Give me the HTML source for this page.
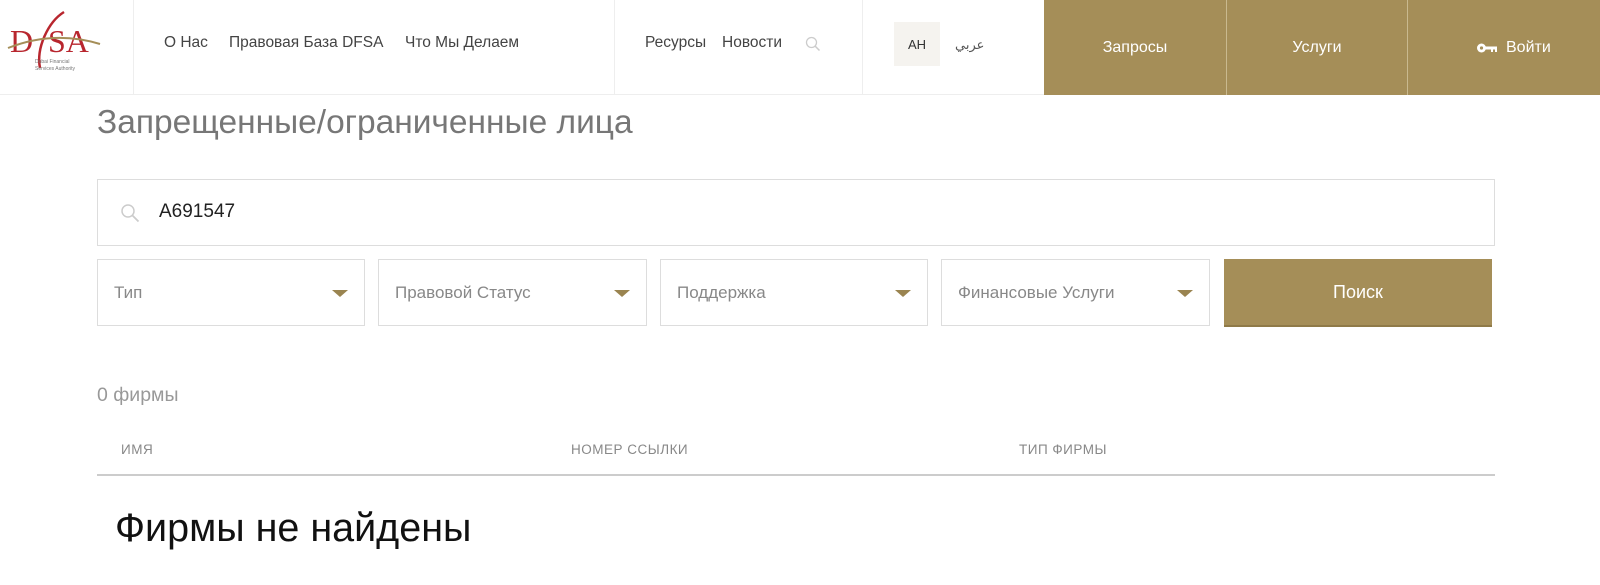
<!DOCTYPE html>
<html><head><meta charset="utf-8"><style>
*{margin:0;padding:0;box-sizing:border-box}
body{width:1600px;height:585px;background:#fff;font-family:"Liberation Sans",sans-serif;position:relative;overflow:hidden;color:#444}
.a{position:absolute}
.hdr{left:0;top:0;width:1600px;height:95px;border-bottom:1px solid #eee}
.vl{width:1px;background:#eee;top:0;height:95px}
.nav{font-size:15.5px;color:#444;top:34px}
.gold{background:#a58e58;top:0;height:95px;color:#fff;font-size:16px;display:flex;align-items:center;justify-content:center}
.box{border:1px solid #ddd;background:#fff}
.dd{top:259px;height:67px;font-size:17px;color:#888;display:flex;align-items:center;padding-left:16px}
.tri{position:absolute;right:16px;top:30px;width:0;height:0;border-left:8px solid transparent;border-right:8px solid transparent;border-top:7px solid #9a8450}
.th{top:442px;font-size:13.5px;color:#888;letter-spacing:.5px}
</style></head><body>
<div class="a hdr"></div>
<svg class="a" style="left:4px;top:8px" width="100" height="68" viewBox="0 0 100 68">
<text x="6" y="44" font-family="Liberation Serif" font-size="32" fill="#b8262e">D</text>
<path d="M36 60 C 32 40 44 14 60 4" stroke="#b8262e" stroke-width="2.5" fill="none"/>
<text x="44" y="44" font-family="Liberation Serif" font-size="32" fill="#b8262e">SA</text>
<path d="M4 40 Q50 22 96 36" stroke="#a58e58" stroke-width="2" fill="none"/>
<text x="31" y="55" font-size="5" fill="#777">Dubai Financial</text>
<text x="31" y="62" font-size="5" fill="#777">Services Authority</text>
</svg>
<div class="a vl" style="left:133px"></div>
<div class="a vl" style="left:614px"></div>
<div class="a vl" style="left:862px"></div>
<div class="a nav" style="left:164px">О Нас</div>
<div class="a nav" style="left:229px">Правовая База DFSA</div>
<div class="a nav" style="left:405px">Что Мы Делаем</div>
<div class="a nav" style="left:645px">Ресурсы</div>
<div class="a nav" style="left:722px">Новости</div>
<svg class="a" style="left:805px;top:36px" width="16" height="16"><circle cx="6.5" cy="6.5" r="5" stroke="#ccc" stroke-width="1.3" fill="none"/><path d="M10 10l4.5 4.5" stroke="#ccc" stroke-width="1.5"/></svg>
<div class="a" style="left:894px;top:22px;width:46px;height:44px;background:#f5f3ef;font-size:13px;color:#333;display:flex;align-items:center;justify-content:center">AH</div>
<div class="a nav" style="left:955px;font-size:13px;color:#555;top:37px">عربي</div>
<div class="a gold" style="left:1044px;width:182px">Запросы</div>
<div class="a gold" style="left:1227px;width:180px">Услуги</div>
<div class="a gold" style="left:1408px;width:192px;justify-content:flex-start;padding-left:68px"><svg width="22" height="12" style="margin-right:8px"><circle cx="5.5" cy="6" r="4.5" fill="#fff"/><circle cx="5.5" cy="6" r="1.6" fill="#a58e58"/><rect x="9" y="4.5" width="12" height="3" fill="#fff"/><rect x="15" y="7" width="2" height="3" fill="#fff"/><rect x="19" y="7" width="2" height="3" fill="#fff"/></svg>Войти</div>
<div class="a vl" style="left:1226px;background:#c9b98f"></div>
<div class="a vl" style="left:1407px;background:#c9b98f"></div>
<div class="a" style="left:97px;top:104px;font-size:33.5px;color:#777">Запрещенные/ограниченные лица</div>
<div class="a box" style="left:97px;top:179px;width:1398px;height:67px"></div>
<svg class="a" style="left:120px;top:203px" width="20" height="20"><circle cx="8" cy="8" r="6" stroke="#ccc" stroke-width="1.5" fill="none"/><path d="M12.5 12.5l6 6" stroke="#ccc" stroke-width="1.8"/></svg>
<div class="a" style="left:159px;top:201px;font-size:19px;color:#222">A691547</div>
<div class="a box dd" style="left:97px;width:268px">Тип<span class="tri"></span></div>
<div class="a box dd" style="left:378px;width:269px">Правовой Статус<span class="tri"></span></div>
<div class="a box dd" style="left:660px;width:268px">Поддержка<span class="tri"></span></div>
<div class="a box dd" style="left:941px;width:269px">Финансовые Услуги<span class="tri"></span></div>
<div class="a" style="left:1224px;top:259px;width:268px;height:68px;background:#a58e58;color:#fff;font-size:18px;display:flex;align-items:center;justify-content:center;border-bottom:2px solid #8f7a48">Поиск</div>
<div class="a" style="left:97px;top:384px;font-size:19.5px;color:#999">0 фирмы</div>
<div class="a th" style="left:121px">ИМЯ</div>
<div class="a th" style="left:571px">НОМЕР ССЫЛКИ</div>
<div class="a th" style="left:1019px">ТИП ФИРМЫ</div>
<div class="a" style="left:97px;top:474px;width:1398px;height:2px;background:#ccc"></div>
<div class="a" style="left:115px;top:506px;font-size:39.5px;color:#111">Фирмы не найдены</div>
</body></html>
